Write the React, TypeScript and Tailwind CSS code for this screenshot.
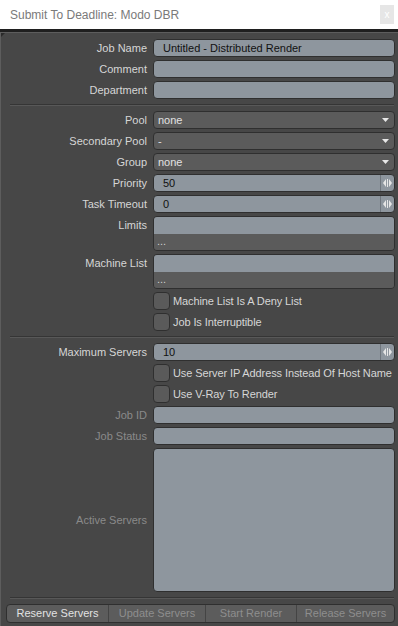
import type { ReactNode } from 'react';

const FONT = "font-['Liberation_Sans',Arial,sans-serif]";

function Label({ children, dim }: { children: ReactNode; dim?: boolean }) {
  return (
    <div className={`w-[147px] shrink-0 pr-[1px] text-right text-[11px] leading-[18px] ${dim ? 'text-[#8a8a8a]' : 'text-[#d6d6d6]'}`}>
      {children}
    </div>
  );
}

function Row({ label, dim, children }: { label?: string; dim?: boolean; children: ReactNode }) {
  return (
    <div className="flex shrink-0 items-start gap-[5px]">
      <Label dim={dim}>{label}</Label>
      <div className="w-[242px]">{children}</div>
    </div>
  );
}

function TextField({ value }: { value?: string }) {
  return (
    <div className="h-[18px] rounded-[4px] border border-[#2f2f2f] bg-[#8e969e] pl-[9px] text-[11px] leading-[16px] text-[#111]">
      {value}
    </div>
  );
}

function Dropdown({ value }: { value: string }) {
  return (
    <div className="flex h-[18px] items-center justify-between rounded-[4px] border border-[#2f2f2f] bg-[#5b5b5b] pl-[4px] pr-[5px] text-[11px] text-[#e2e2e2]">
      <span>{value}</span>
      <svg width="7" height="4" viewBox="0 0 7 4" aria-hidden="true">
        <path d="M0 0H7L3.5 4Z" fill="#e8e8e8" />
      </svg>
    </div>
  );
}

function Spinner({ value }: { value: string }) {
  return (
    <div className="flex h-[18px] items-stretch rounded-[4px] border border-[#2f2f2f] bg-[#8e969e] text-[11px] text-[#111]">
      <div className="flex-1 pl-[9px] leading-[16px]">{value}</div>
      <div className="flex w-[14px] items-center justify-center border-l border-[#6f767d]">
        <svg width="9" height="8" viewBox="0 0 9 8" aria-hidden="true">
          <path d="M3 0V8L0 4Z" fill="#e6e6e6" />
          <rect x="4" y="0" width="1" height="8" fill="#e6e6e6" />
          <path d="M6 0V8L9 4Z" fill="#e6e6e6" />
        </svg>
      </div>
    </div>
  );
}

function ListField() {
  return (
    <div className="h-[35px] overflow-hidden rounded-[4px] border border-[#2f2f2f]">
      <div className="h-[17px] bg-[#8e969e]" />
      <div className="h-[16px] bg-[#5b5b5b] pl-[3px] text-[11px] leading-[14px] text-[#cfcfcf]">...</div>
    </div>
  );
}

function Check({ label }: { label: string }) {
  return (
    <div className="flex items-center gap-[3px]">
      <div className="h-[18px] w-[17px] shrink-0 rounded-[4px] border border-[#2f2f2f] bg-[#5a5a5a]" />
      <span className="whitespace-nowrap text-[11px] tracking-[-0.1px] text-[#d6d6d6]">{label}</span>
    </div>
  );
}

function Separator() {
  return (
    <div className="my-[2px] ml-[9px] mr-[4px] shrink-0 border-t border-b border-t-[#353535] border-b-[#585858]" />
  );
}

export default function App() {
  return (
    <div className={`flex h-[626px] w-[398px] flex-col overflow-hidden bg-white ${FONT}`}>
      {/* title bar */}
      <div className="flex h-[29px] shrink-0 items-center justify-between pl-[10px] pr-[4px]">
        <span className="text-[12px] text-[#7a7a7a]">Submit To Deadline: Modo DBR</span>
        <div className="flex h-[19px] w-[14px] items-center justify-center bg-[#e6e6e6] text-[10px] text-white">x</div>
      </div>
      <div className="h-[3px] shrink-0 bg-[#1f1f1f]" />

      <div className="relative flex flex-1 flex-col gap-[3px] border-t border-l border-[#5d5d5d] bg-[#474747] pt-[6px]">
        <div className="absolute left-0 top-0 h-0 w-0 border-t-[4px] border-r-[4px] border-t-[#2a2a2a] border-r-transparent" />

        <Row label="Job Name"><TextField value="Untitled - Distributed Render" /></Row>
        <Row label="Comment"><TextField /></Row>
        <Row label="Department"><TextField /></Row>

        <Separator />

        <Row label="Pool"><Dropdown value="none" /></Row>
        <Row label="Secondary Pool"><Dropdown value="-" /></Row>
        <Row label="Group"><Dropdown value="none" /></Row>
        <Row label="Priority"><Spinner value="50" /></Row>
        <Row label="Task Timeout"><Spinner value="0" /></Row>
        <Row label="Limits"><ListField /></Row>
        <Row label="Machine List"><ListField /></Row>
        <Row><Check label="Machine List Is A Deny List" /></Row>
        <Row><Check label="Job Is Interruptible" /></Row>

        <Separator />

        <Row label="Maximum Servers"><Spinner value="10" /></Row>
        <Row><Check label="Use Server IP Address Instead Of Host Name" /></Row>
        <Row><Check label="Use V-Ray To Render" /></Row>
        <Row label="Job ID" dim><TextField /></Row>
        <Row label="Job Status" dim><TextField /></Row>
        <div className="flex shrink-0 items-center gap-[5px]">
          <Label dim>Active Servers</Label>
          <div className="h-[144px] w-[242px] rounded-[4px] border border-[#2f2f2f] bg-[#8e969e]" />
        </div>

        <Separator />

        <div className="ml-[5px] mr-[3px] flex h-[19px] shrink-0 overflow-hidden rounded-[4px] border border-[#2f2f2f] bg-[#5c5c5c] text-[11px]">
          <div className="flex w-[101px] items-center justify-center text-[#e2e2e2]">Reserve Servers</div>
          <div className="flex w-[97px] items-center justify-center border-l border-[#444] text-[#8e8e8e]">Update Servers</div>
          <div className="flex w-[91px] items-center justify-center border-l border-[#444] text-[#8e8e8e]">Start Render</div>
          <div className="flex flex-1 items-center justify-center border-l border-[#444] text-[#8e8e8e]">Release Servers</div>
        </div>
      </div>
    </div>
  );
}
